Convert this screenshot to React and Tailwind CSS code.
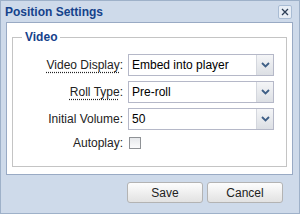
const FONT = { fontFamily: '"Liberation Sans", Arial, sans-serif' };

const Trigger = () => (
  <div className="w-[17px] h-full flex items-center justify-center border-l border-[#d4d7de] bg-gradient-to-b from-[#f4f5f7] to-[#dcdfe4]">
    <svg width="9" height="6" viewBox="0 0 9 6">
      <path d="M1 1 L4.5 4.5 L8 1" fill="none" stroke="#3f5f86" strokeWidth="1.8" />
    </svg>
  </div>
);

const ComboField = ({ value }) => (
  <div className="ml-[5px] w-[146px] h-[22px] flex border border-[#b5b8c8] bg-white">
    <div className="flex-1 pl-[3px] flex items-center text-[12px] text-black">{value}</div>
    <Trigger />
  </div>
);

const Row = ({ label, tip, children, h = "h-[22px]" }) => (
  <div className={`flex items-center ${h}`}>
    <div className="w-[110px] text-right text-[12px] text-[#222]">
      {tip ? (
        <span className="underline decoration-dotted underline-offset-[3px]">{label}</span>
      ) : (
        label
      )}
      :
    </div>
    {children}
  </div>
);

export default function App() {
  return (
    <div
      className="w-[300px] h-[214px] bg-[#cedaea] border border-[#9eb1c9] flex flex-col"
      style={FONT}
    >
      {/* Title bar */}
      <div className="h-[21px] flex items-center justify-between pl-[4px] pr-[7px]">
        <span className="text-[12px] font-bold text-[#15428b]">Position Settings</span>
        <div className="w-[14px] h-[14px] flex items-center justify-center rounded-[2px] border border-[#a9bcd4] bg-[#e8eef6]">
          <svg width="8" height="8" viewBox="0 0 8 8">
            <path d="M1 1 L7 7 M7 1 L1 7" stroke="#2d3f57" strokeWidth="1.3" />
          </svg>
        </div>
      </div>

      {/* Body */}
      <div className="ml-[5px] w-[287px] h-[153px] border border-[#99aac4] bg-white px-[5px]">
        <fieldset className="mt-[7px] h-[137px] border border-[#c4c4c4] pt-[10px] flex flex-col gap-[5px]">
          <legend className="ml-[9px] px-[3px] text-[12px] leading-[14px] font-bold text-[#15428b]">
            Video
          </legend>
          <Row label="Video Display" tip>
            <ComboField value="Embed into player" />
          </Row>
          <Row label="Roll Type" tip>
            <ComboField value="Pre-roll" />
          </Row>
          <Row label="Initial Volume">
            <ComboField value="50" />
          </Row>
          <Row label="Autoplay" h="h-[15px]">
            <div className="ml-[6px] w-[12px] h-[12px] border border-[#8f9296] bg-gradient-to-b from-[#e6e8eb] to-[#fbfbfc]" />
          </Row>
        </fieldset>
      </div>

      {/* Buttons */}
      <div className="mt-[7px] flex justify-end gap-[4px] pr-[16px]">
        {["Save", "Cancel"].map((b) => (
          <button
            key={b}
            className="w-[76px] h-[21px] rounded-[3px] border border-[#b3b3b3] bg-gradient-to-b from-[#fdfdfd] to-[#e2e2e2] text-[12px] text-[#222]"
          >
            {b}
          </button>
        ))}
      </div>
    </div>
  );
}
